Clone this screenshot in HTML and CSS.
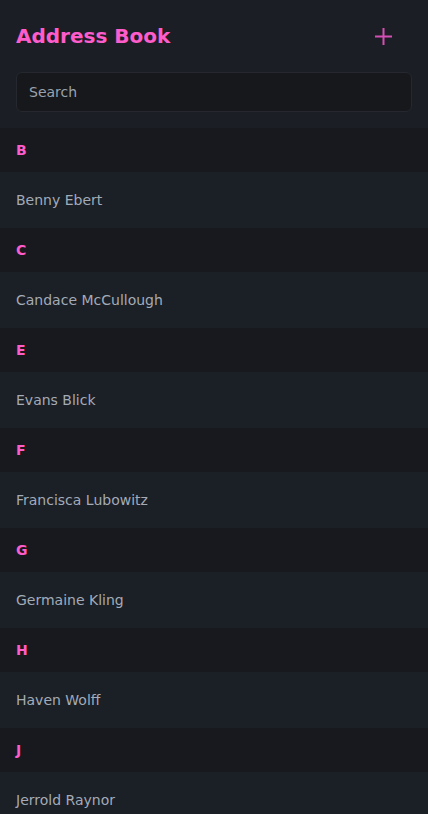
FILE: index.html
```html
<!DOCTYPE html>
<html>
<head>
<meta charset="utf-8">
<link rel="stylesheet" href="styles.css">
</head>
<body>
<div class="app">
  <header class="header">
    <h1 class="title">Address Book</h1>
    <button class="add" aria-label="Add">
      <svg width="17" height="17" viewBox="0 0 17 17"><path d="M8.5 0v17M0 8.5h17" stroke="currentColor" stroke-width="2" fill="none"/></svg>
    </button>
  </header>
  <div class="search-wrap">
    <input class="search" type="text" placeholder="Search">
  </div>
  <ul class="list">
    <li class="letter">B</li>
    <li class="item">Benny Ebert</li>
    <li class="letter">C</li>
    <li class="item">Candace McCullough</li>
    <li class="letter">E</li>
    <li class="item">Evans Blick</li>
    <li class="letter">F</li>
    <li class="item">Francisca Lubowitz</li>
    <li class="letter">G</li>
    <li class="item">Germaine Kling</li>
    <li class="letter">H</li>
    <li class="item">Haven Wolff</li>
    <li class="letter">J</li>
    <li class="item">Jerrold Raynor</li>
  </ul>
</div>
</body>
</html>
```
FILE: styles.css
```css
html, body {
  margin: 0;
  padding: 0;
  background: #1b1e25;
  font-family: "DejaVu Sans", sans-serif;
  height: 100%;
  overflow: hidden;
}
.app {
  display: flex;
  flex-direction: column;
}
.header {
  display: flex;
  align-items: center;
  justify-content: space-between;
  height: 72px;
  padding: 0 16px;
  box-sizing: border-box;
}
.title {
  margin: 0;
  font-size: 20px;
  font-weight: bold;
  color: #ff5ccb;
}
.add {
  background: none;
  border: none;
  padding: 0;
  margin-right: 20px;
  color: #d64fb6;
  display: flex;
  width: 17px;
  height: 17px;
}
.search-wrap {
  padding: 0 16px 16px;
}
.search {
  box-sizing: border-box;
  width: 100%;
  height: 40px;
  background: #16181c;
  border: 1px solid #25282e;
  border-radius: 6px;
  padding: 0 12px;
  font-family: "DejaVu Sans", sans-serif;
  font-size: 14px;
  color: #a0a8b4;
  outline: none;
}
.search::placeholder {
  color: #9aa2ae;
}
.list {
  list-style: none;
  margin: 0;
  padding: 0;
}
.letter {
  height: 44px;
  display: flex;
  align-items: center;
  padding: 0 16px;
  background: #17191e;
  font-size: 14px;
  font-weight: bold;
  color: #ff5ccb;
}
.item {
  height: 56px;
  display: flex;
  align-items: center;
  padding: 0 16px;
  background: #1b1f26;
  font-size: 14px;
  color: #a3abb7;
}
```
